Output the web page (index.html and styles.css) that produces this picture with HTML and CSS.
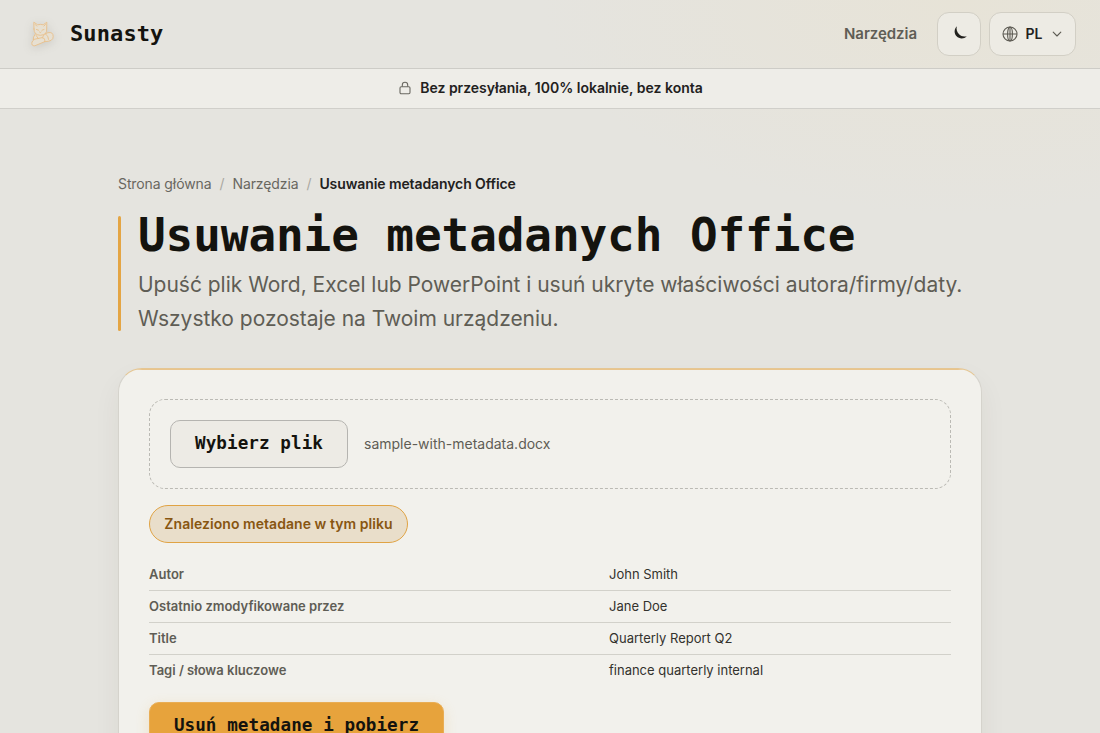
FILE: index.html
```
<!DOCTYPE html>
<html lang="pl">
<head>
    <meta charset="UTF-8">
    <meta name="viewport" content="width=device-width, initial-scale=1.0">
    <title>Usuwanie metadanych Office - Sunasty</title>
    <link rel="stylesheet" href="styles.css">
</head>
<body>
    <header class="header">
        <a class="brand" href="#">
            <svg class="brand-logo" viewBox="0 0 28 28" fill="none" stroke="#e9c08a" stroke-width="0.9" stroke-linecap="round" stroke-linejoin="round">
                <path fill="#e7e0d2" d="M7.3 14Q4.7 17 5.3 20.5L4 22Q3 26 6.8 25.8L16.9 21.6Q25.3 21.5 25.2 16.5 25.2 11.6 19.9 12.7L17.4 13.8Z"/>
                <path fill="#e7e0d2" d="M6 9 5.8 2.2 9.7 4.8Q12.5 4 15.2 4.8L18.8 2.2 18.7 9Q19.2 15 12.3 15.3 5.7 15 6 9Z"/>
                <path d="m7.2 4.5 1.6 1.6M17.5 4.5l-1.6 1.6M8.5 9.5l2 .7M16 9.5l-2 .7M11.5 12l.8.6.8-.6"/>
                <path d="M17.4 13.8q3.3 2 3.2 5.6M5.3 19.5l8.5-1.8q3 0 3.1 2.4l-.4 1.6M8.2 15.5l2 3M15.8 15.3l-1.6 2.4"/>
            </svg>
            <span>Sunasty</span>
        </a>
        <nav class="nav">
            <a class="nav-link" href="#">Narzędzia</a>
            <button class="nav-button" aria-label="Motyw">
                <svg class="moon" width="16" height="16" viewBox="0 0 16 16" fill="#22211d">
                    <path d="M3.8 1.2C.9 4.1 1 8.7 3.6 11.3c2.8 2.9 7.5 2.8 10.2-.1-3.1.8-5.7.1-7.7-1.9C3.9 7.1 3.1 4.2 3.8 1.2Z"/>
                </svg>
            </button>
            <button class="nav-button lang">
                <svg width="16" height="16" viewBox="0 0 16 16" fill="none" stroke="#5c5a52" stroke-width="1.1">
                    <circle cx="8" cy="8" r="7"/>
                    <ellipse cx="8" cy="8" rx="2.4" ry="7"/>
                    <path d="M1 8h14M8 1v14"/>
                </svg>
                <span>PL</span>
                <svg class="chevron" width="10" height="10" viewBox="0 0 10 10" fill="none" stroke="#5c5a52" stroke-width="1.1" stroke-linecap="round" stroke-linejoin="round">
                    <path d="m1.2 3.2 3.8 3.8L8.8 3.2"/>
                </svg>
            </button>
        </nav>
    </header>

    <div class="privacy">
        <svg width="12" height="14" viewBox="0 0 12 14" fill="none" stroke="#6a6861" stroke-width="1.1" stroke-linejoin="round">
            <rect x="1" y="5.7" width="10" height="7" rx="1.2"/>
            <path d="M3.3 5.7V4a2.7 2.7 0 0 1 5.4 0v1.7"/>
        </svg>
        <span>Bez przesyłania, 100% lokalnie, bez konta</span>
    </div>

    <main class="container">
        <nav class="breadcrumbs">
            <a href="#">Strona główna</a>
            <span class="sep">/</span>
            <a href="#">Narzędzia</a>
            <span class="sep">/</span>
            <strong>Usuwanie metadanych Office</strong>
        </nav>

        <div class="hero">
            <h1>Usuwanie metadanych Office</h1>
            <p>Upuść plik Word, Excel lub PowerPoint i usuń ukryte właściwości autora/firmy/daty. Wszystko pozostaje na Twoim urządzeniu.</p>
        </div>

        <section class="card">
            <div class="dropzone">
                <button class="btn">Wybierz plik</button>
                <span class="file-name">sample-with-metadata.docx</span>
            </div>
            <div class="status">Znaleziono metadane w tym pliku</div>
            <dl class="metadata">
                <div class="row"><dt>Autor</dt><dd>John Smith</dd></div>
                <div class="row"><dt>Ostatnio zmodyfikowane przez</dt><dd>Jane Doe</dd></div>
                <div class="row"><dt>Title</dt><dd>Quarterly Report Q2</dd></div>
                <div class="row"><dt>Tagi / słowa kluczowe</dt><dd>finance quarterly internal</dd></div>
            </dl>
            <button class="btn btn-primary">Usuń metadane i pobierz</button>
        </section>
    </main>
</body>
</html>
```
FILE: styles.css
```
* {
    box-sizing: border-box;
}
body {
    margin: 0;
    height: 733px;
    overflow: hidden;
    font-family: Inter, "Liberation Sans", sans-serif;
    color: #22211d;
    background: radial-gradient(ellipse 420px 215px at 960px 0, #e7e3d7, rgba(231, 227, 215, 0)), #e5e4df;
}
a {
    color: inherit;
    text-decoration: none;
}
button {
    font: inherit;
    color: inherit;
    cursor: pointer;
}

/* Header */
.header {
    display: flex;
    align-items: center;
    justify-content: space-between;
    height: 69px;
    padding: 0 24px 1px 28px;
    border-bottom: 1px solid #cdccc7;
}
.brand {
    display: flex;
    align-items: center;
    gap: 14px;
    font-family: "DejaVu Sans Mono", monospace;
    font-size: 22px;
    font-weight: bold;
    letter-spacing: 0.1px;
    color: #14130e;
}
.brand-logo {
    width: 28px;
    height: 28px;
    filter: drop-shadow(0 2px 5px rgba(60, 55, 40, 0.15));
}
.nav {
    display: flex;
    align-items: center;
    gap: 8px;
}
.nav-link {
    margin-right: 12px;
    font-size: 15px;
    font-weight: 600;
    letter-spacing: -0.05px;
    color: #5f5d55;
}
.nav-button {
    display: flex;
    align-items: center;
    justify-content: center;
    width: 44px;
    height: 44px;
    padding: 0;
    border: 1px solid #d2cfc5;
    border-radius: 12px;
    background: #edebe4;
}
.moon {
    margin: 0 0 1px 3px;
}
.lang {
    width: 87px;
    gap: 7.5px;
    padding-right: 1px;
    font-size: 14px;
    font-weight: 600;
}
.chevron {
    margin-left: 2px;
}

.privacy {
    display: flex;
    align-items: center;
    justify-content: center;
    gap: 9px;
    height: 40px;
    padding: 0 0 2px 2px;
    border-bottom: 1px solid #d0cfca;
    background: #eeede8;
    font-size: 14px;
    font-weight: 600;
}

/* Page */
.container {
    width: 864px;
    margin: 0 auto;
    padding-top: 65px;
}
.breadcrumbs {
    display: flex;
    gap: 8px;
    height: 20px;
    line-height: 20px;
    font-size: 14px;
    letter-spacing: -0.1px;
    color: #69675f;
}
.breadcrumbs .sep {
    color: #aaa8a1;
}
.breadcrumbs strong {
    font-weight: 600;
    color: #22211d;
}
.hero {
    position: relative;
    margin-top: 22px;
    height: 115px;
    padding-left: 20px;
}
.hero::before {
    content: "";
    position: absolute;
    left: 0;
    top: 0;
    width: 3px;
    height: 100%;
    border-radius: 2px;
    background: #e4a544;
}
.hero h1 {
    margin: 0;
    line-height: 38px;
    font-family: "DejaVu Sans Mono", monospace;
    font-size: 46px;
    font-weight: bold;
    letter-spacing: -0.1px;
    white-space: nowrap;
    color: #14130e;
}
.hero p {
    margin: 14px 0 0;
    font-size: 21px;
    letter-spacing: -0.02px;
    line-height: 34px;
    color: #5f5d55;
}

/* Card */
.card {
    position: relative;
    height: 500px;
    margin-top: 37px;
    padding: 30px;
    overflow: hidden;
    border: 1px solid #d5d3cc;
    border-top-color: #e5c693;
    border-radius: 24px;
    background: #f2f1ec;
    box-shadow: 0 12px 28px rgba(60, 55, 40, 0.06);
}
.card::before {
    content: "";
    position: absolute;
    inset: 0 0 auto;
    height: 1px;
    background: #e9c48c;
}
.dropzone {
    display: flex;
    align-items: center;
    gap: 16px;
    height: 90px;
    padding: 20px;
    border: 1px dashed #bbbab4;
    border-radius: 16px;
}
.btn {
    width: 178px;
    height: 48px;
    padding: 0 0 2px;
    border: 1px solid #b5b4b0;
    border-radius: 10px;
    background: #edebe5;
    font-family: "DejaVu Sans Mono", monospace;
    font-size: 17.6px;
    font-weight: bold;
    letter-spacing: 0.07px;
    color: #14130e;
}
.file-name {
    padding-bottom: 1px;
    font-size: 14px;
    color: #5f5d55;
}
.status {
    width: 259px;
    height: 38px;
    margin-top: 16px;
    border: 1px solid #e0a344;
    border-radius: 19px;
    background: #e9deca;
    line-height: 36px;
    text-align: center;
    white-space: nowrap;
    font-size: 14px;
    font-weight: 600;
    letter-spacing: 0.05px;
    color: #885611;
}
.metadata {
    margin: 15.6px 0 0;
    font-size: 13px;
}
.row {
    display: grid;
    grid-template-columns: 460px 1fr;
    height: 32.2px;
    line-height: 30.3px;
    border-bottom: 1px solid #d2d1ca;
}
.row:last-child {
    border-bottom: none;
}
.row dt {
    font-weight: 600;
    color: #5f5d55;
}
.row dd {
    margin: 0;
    color: #33322d;
}
.btn-primary {
    width: 295px;
    margin-top: 14.6px;
    border-color: #e9ad54;
    background: #e7a33c;
    box-shadow: 0 4px 14px rgba(231, 163, 60, 0.2);
}
```
